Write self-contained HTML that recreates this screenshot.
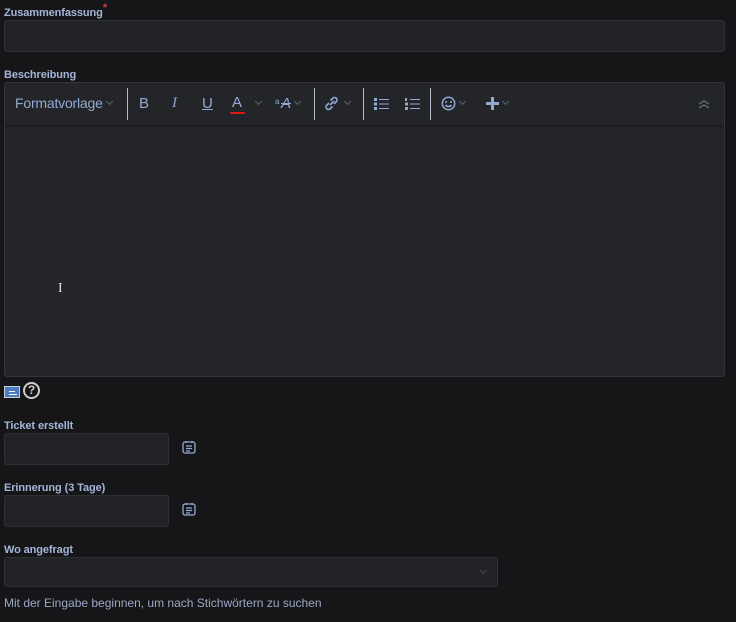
<!DOCTYPE html>
<html><head><meta charset="utf-8"><style>
*{box-sizing:border-box;margin:0;padding:0}
body{width:736px;height:622px;background:#161618;font-family:"Liberation Sans",sans-serif;position:relative;overflow:hidden;color:#aabbdd}
.lbl{position:absolute;left:4px;font-size:11px;font-weight:bold;color:#a4b6d8;letter-spacing:-0.1px}
.inp{position:absolute;background:#222326;border:1px solid #2e3034;border-radius:3px}
.tb{position:absolute;top:93px;font-size:14px;color:#92a9d4}
.sep{position:absolute;top:88px;width:1px;height:32px;background:#b7bcc6}
.car{position:absolute;top:99px;width:5px;height:5px;border-right:1.3px solid #5a6272;border-bottom:1.3px solid #5a6272;transform:rotate(45deg)}
</style></head><body>
<div class="lbl" style="top:7px">Zusammenfassung<span style="color:#d04040;position:relative;top:-5px">*</span></div>
<div class="inp" style="left:4px;top:20px;width:721px;height:32px"></div>
<div class="lbl" style="top:69px">Beschreibung</div>
<div class="inp" style="left:4px;top:82px;width:721px;height:295px;background:#242529;border-color:#33353a"></div>
<div style="position:absolute;left:5px;top:125px;width:719px;height:2px;background:#1c1d20"></div>
<div class="tb" style="left:15px;top:95px;font-size:14px;letter-spacing:-0.2px">Formatvorlage</div>
<div class="car" style="left:107px"></div>
<div class="sep" style="left:127px"></div>
<div class="tb" style="left:139px;top:95px;font-size:15px">B</div>
<div class="tb" style="left:172px;top:95px;font-size:15px;font-style:italic;font-family:'Liberation Serif',serif">I</div>
<div class="tb" style="left:202px;top:95px;font-size:15px;text-decoration:underline">U</div>
<div class="tb" style="left:232px;top:94px;font-size:15px">A</div>
<div style="position:absolute;left:230px;top:112px;width:15px;height:2px;background:#e01818;border-radius:1px"></div>
<div class="car" style="left:256px"></div>
<div class="tb" style="left:275px;top:97px;font-size:8px">a</div>
<div class="tb" style="left:281px;top:95px;font-size:15px;font-style:italic;text-decoration:line-through">A</div>
<div class="car" style="left:295px"></div>
<div class="sep" style="left:314px"></div>
<svg style="position:absolute;left:323px;top:95px" width="17" height="17" viewBox="0 0 17 17" fill="none" stroke="#92a9d4" stroke-width="1.6"><path d="M7 10l4-4M6 8l-2.5 2.5a2.5 2.5 0 0 0 3.5 3.5L9.5 11.5M11 9l2.5-2.5a2.5 2.5 0 0 0-3.5-3.5L7.5 5.5"/></svg>
<div class="car" style="left:345px"></div>
<div class="sep" style="left:363px"></div>
<svg style="position:absolute;left:374px;top:97px" width="16" height="14" viewBox="0 0 16 14" fill="#92a9d4"><rect x="0" y="1" width="3" height="3"/><rect x="0" y="5.5" width="3" height="3"/><rect x="0" y="10" width="3" height="3"/><rect x="5" y="2" width="10" height="1"/><rect x="5" y="6.5" width="10" height="1"/><rect x="5" y="11" width="10" height="1"/></svg>
<svg style="position:absolute;left:405px;top:97px" width="16" height="14" viewBox="0 0 16 14" fill="#92a9d4"><rect x="0" y="1" width="2" height="3"/><rect x="0" y="5.5" width="3" height="3"/><rect x="0" y="10" width="3" height="3"/><rect x="5" y="2" width="10" height="1"/><rect x="5" y="6.5" width="10" height="1"/><rect x="5" y="11" width="10" height="1"/></svg>
<div class="sep" style="left:430px"></div>
<svg style="position:absolute;left:441px;top:96px" width="15" height="15" viewBox="0 0 15 15" fill="none" stroke="#92a9d4" stroke-width="1.5"><circle cx="7.5" cy="7.5" r="6.2"/><path d="M5 5v2M10 5v2M4.5 9c1.5 2 4.5 2 6 0"/></svg>
<div class="car" style="left:460px"></div>
<svg style="position:absolute;left:486px;top:97px" width="13" height="13" viewBox="0 0 13 13" fill="#92a9d4"><rect x="5" y="0" width="3" height="13"/><rect x="0" y="5" width="13" height="3"/></svg>
<div class="car" style="left:503px"></div>
<svg style="position:absolute;left:698px;top:99px" width="12" height="10" viewBox="0 0 12 10" fill="none" stroke="#6c717b" stroke-width="1.2"><path d="M1 5l5-3 5 3M1 9l5-3 5 3"/></svg>
<div style="position:absolute;left:58px;top:281px;font-size:14px;color:#ddd;font-family:'Liberation Serif',serif">I</div>
<div style="position:absolute;left:4px;top:386px;width:16px;height:12px;background:#4b7bbf;border:1px solid #ccc"><div style="margin:4px 0 0 4px;width:6px;height:1px;background:#fff"></div><div style="margin:2px 0 0 4px;width:8px;height:1px;background:#fff"></div></div>
<div style="position:absolute;left:23px;top:382px;width:17px;height:17px;border:2px solid #ccc;border-radius:50%;color:#ccc;font-size:12px;font-weight:bold;text-align:center;line-height:13px">?</div>
<div class="lbl" style="top:420px">Ticket erstellt</div>
<div class="inp" style="left:4px;top:433px;width:165px;height:32px"></div>
<svg style="position:absolute;left:182px;top:440px" width="14" height="14" viewBox="0 0 14 14" fill="none" stroke="#92a9d4" stroke-width="1.3"><rect x="1" y="2" width="12" height="11" rx="2"/><path d="M4 1v2M10 1v2M4 6h6M4 8.5h6M4 11h4"/></svg>
<div class="lbl" style="top:482px">Erinnerung (3 Tage)</div>
<div class="inp" style="left:4px;top:495px;width:165px;height:32px"></div>
<svg style="position:absolute;left:182px;top:502px" width="14" height="14" viewBox="0 0 14 14" fill="none" stroke="#92a9d4" stroke-width="1.3"><rect x="1" y="2" width="12" height="11" rx="2"/><path d="M4 1v2M10 1v2M4 6h6M4 8.5h6M4 11h4"/></svg>
<div class="lbl" style="top:544px">Wo angefragt</div>
<div class="inp" style="left:4px;top:557px;width:494px;height:30px"></div>
<div class="car" style="left:481px;top:568px;border-color:#444850"></div>
<div style="position:absolute;left:4px;top:596px;font-size:12px;color:#9aa9c6">Mit der Eingabe beginnen, um nach Stichwörtern zu suchen</div>
</body></html>
